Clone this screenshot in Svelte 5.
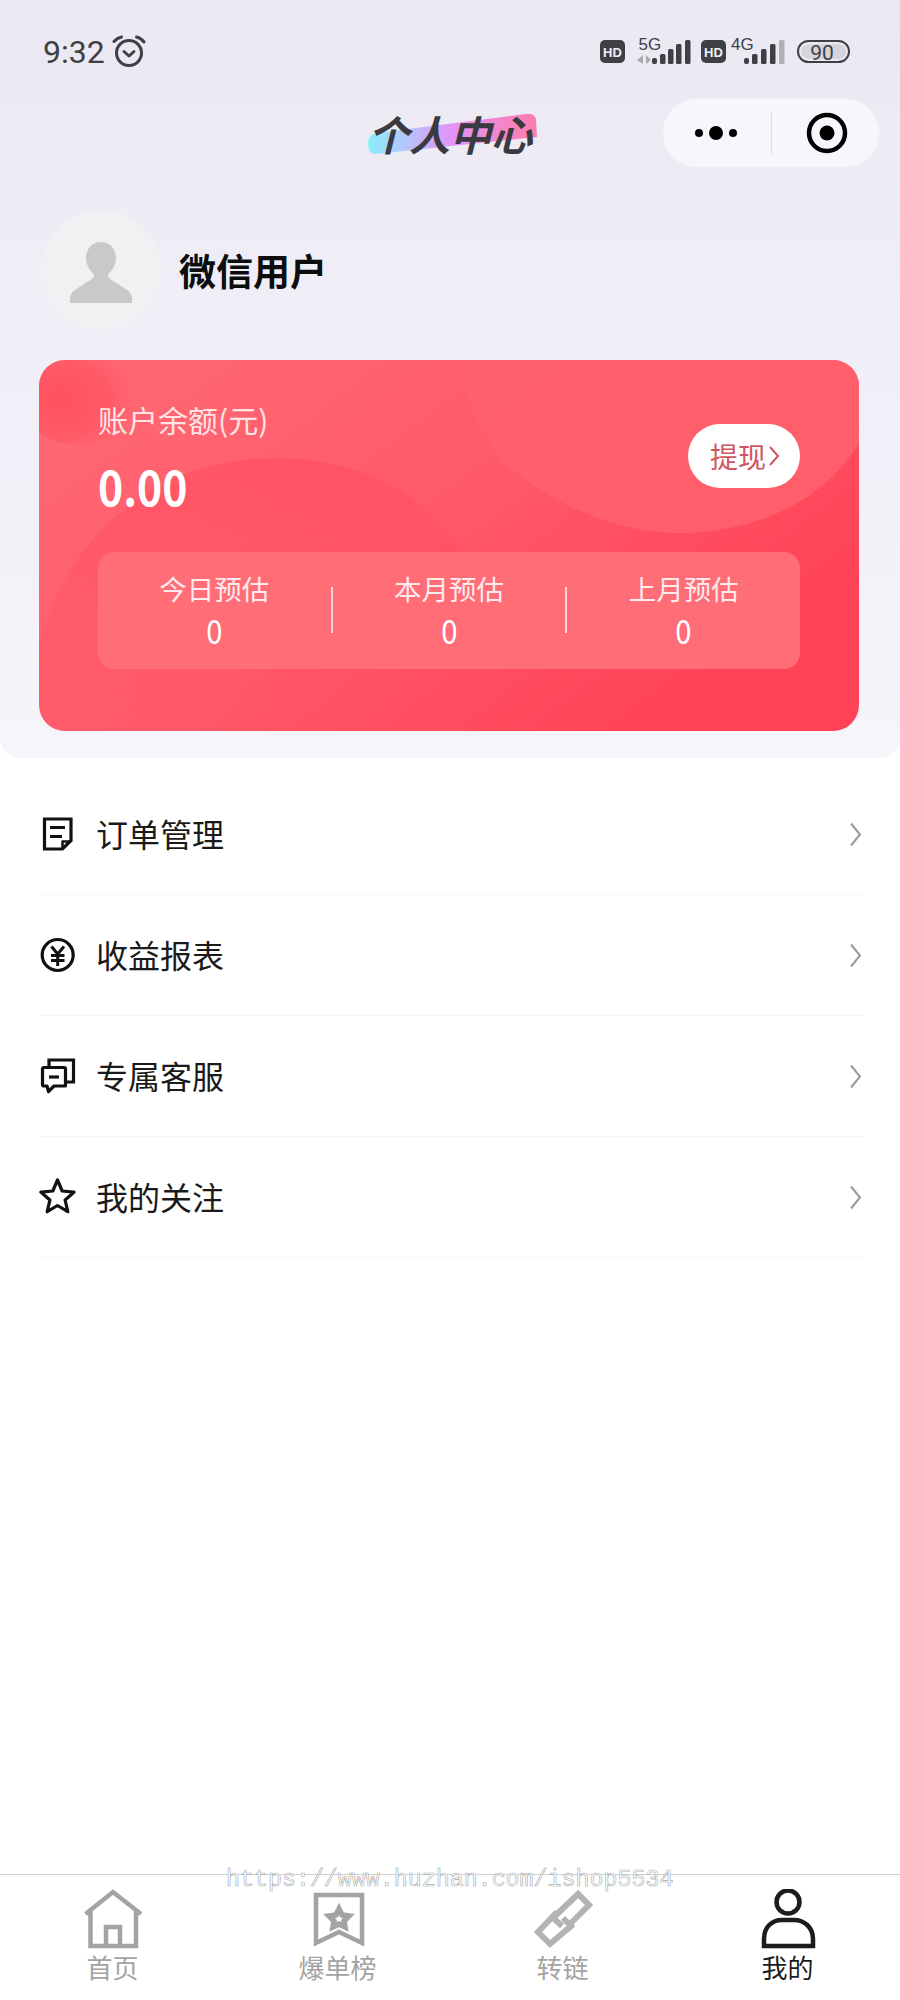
<script>
  const menu = [
    { label: '订单管理', icon: 'doc' },
    { label: '收益报表', icon: 'yen' },
    { label: '专属客服', icon: 'chat' },
    { label: '我的关注', icon: 'star' }
  ];
  const stats = ['今日预估', '本月预估', '上月预估'];
  const tabs = [
    { label: '首页', icon: 'home' },
    { label: '爆单榜', icon: 'rank' },
    { label: '转链', icon: 'link' },
    { label: '我的', icon: 'me', active: true }
  ];
</script>

<div class="page">
  <header class="panel">
    <div class="status">
      <div class="clock">
        <span class="time">9:32</span>
        <svg class="alarm" width="36" height="36" viewBox="0 0 36 36" fill="none" stroke="#3f3f46" stroke-width="3" stroke-linecap="round" stroke-linejoin="round">
          <circle cx="17" cy="20" r="12.5" />
          <path d="M12 18.5 L17 23 L22 18.5" />
          <path d="M2 8.5 Q5 5 9.5 4" />
          <path d="M24.5 4 Q29 5 32 9" />
        </svg>
      </div>
      <svg class="indicators" width="252" height="36" viewBox="600 35 252 36" fill="#3f3f46">
        <rect x="600" y="41" width="25" height="23" rx="5" />
        <text x="612.5" y="57.5" class="hd">HD</text>
        <text x="638.5" y="51" class="net">5G</text>
        <path d="M643 56 V65 L637 61 Z M646 56 V65 L651 61 Z" fill="#a9a9b0" />
        <rect x="652" y="59" width="5" height="6" rx="2" />
        <rect x="660" y="55" width="5.5" height="10" rx="1.5" />
        <rect x="668" y="50" width="5.5" height="15" rx="1.5" />
        <rect x="676" y="45" width="5.5" height="20" rx="1.5" />
        <rect x="685" y="41" width="5.5" height="24" rx="1.5" />
        <rect x="701" y="41" width="25" height="23" rx="5" />
        <text x="713.5" y="57.5" class="hd">HD</text>
        <text x="731" y="51" class="net">4G</text>
        <rect x="744" y="59" width="5" height="6" rx="2" />
        <rect x="752" y="55" width="5.5" height="10" rx="1.5" />
        <rect x="761" y="50" width="5.5" height="15" rx="1.5" />
        <rect x="770" y="45" width="5.5" height="20" rx="1.5" />
        <rect x="779" y="41" width="5.5" height="24" rx="1.5" fill="#afafb5" />
        <rect x="798" y="42" width="51" height="21" rx="10.5" fill="none" stroke="#3f3f46" stroke-width="2" />
        <path d="M812 45 H838 Q846 45 846 52.5 Q846 60 838 60 H812 Q801 60 801 52.5 Q801 45 812 45 Z" fill="#d6d4db" />
        <text x="822" y="61" class="batt">90</text>
      </svg>
    </div>

    <nav class="navbar">
      <div class="title">
        <svg class="swash" width="172" height="46" viewBox="0 0 172 46">
          <defs>
            <linearGradient id="swash-fill" x1="0" y1="0" x2="1" y2="0">
              <stop offset="0" stop-color="#8ceffc" />
              <stop offset="0.5" stop-color="#e492f8" />
              <stop offset="1" stop-color="#fb7dab" />
            </linearGradient>
          </defs>
          <path d="M11 23 L160 4 Q168 3 170 9 L171 27 L10 44 Q2 44 2 34 Q2 24 11 23 Z" fill="url(#swash-fill)" />
        </svg>
        <span>个人中心</span>
      </div>
      <div class="capsule">
        <div class="dots"><i></i><b></b><i></i></div>
        <div class="sep"></div>
        <svg width="44" height="44" viewBox="0 0 44 44" fill="none">
          <circle cx="22" cy="22" r="18" stroke="#000" stroke-width="4.5" />
          <circle cx="22" cy="22" r="7.5" fill="#000" />
        </svg>
      </div>
    </nav>

    <section class="profile">
      <div class="avatar">
        <svg width="64" height="64" viewBox="0 0 64 64" fill="#c9c9c9">
          <path d="M32 2 C41 2 47 9 47 18 C47 25 43 31 39 34 C39 38 41 39 46 42 L58 50 C61 52 63 55 63 59 V63 H1 V59 C1 55 3 52 6 50 L18 42 C23 39 25 38 25 34 C21 31 17 25 17 18 C17 9 23 2 32 2 Z" />
        </svg>
      </div>
      <div class="name">微信用户</div>
    </section>

    <section class="card">
      <svg class="card-bg" width="820" height="371" viewBox="0 0 820 371" preserveAspectRatio="none">
        <defs>
          <linearGradient id="card-fill" x1="0" y1="0" x2="1" y2="0.6">
            <stop offset="0" stop-color="#ff6b75" />
            <stop offset="0.55" stop-color="#ff5969" />
            <stop offset="1" stop-color="#ff4256" />
          </linearGradient>
          <radialGradient id="corner-fill" cx="0.18" cy="0.45" r="0.7">
            <stop offset="0" stop-color="#ff4f5d" stop-opacity="0.95" />
            <stop offset="0.65" stop-color="#ff4f5d" stop-opacity="0.55" />
            <stop offset="1" stop-color="#ff4f5d" stop-opacity="0" />
          </radialGradient>
          <linearGradient id="hump-fill" x1="0" y1="0" x2="0" y2="1">
            <stop offset="0" stop-color="#ff4f60" stop-opacity="0.7" />
            <stop offset="1" stop-color="#ff4f60" stop-opacity="0" />
          </linearGradient>
        </defs>
        <rect width="820" height="371" fill="url(#card-fill)" />
        <path d="M420 0 C430 60 450 80 466 103 C510 140 565 170 633 173 C700 175 780 150 820 83 V0 Z" fill="#ff616c" opacity="0.85" />
        <path d="M0 0 H110 V60 C90 75 60 84 33 84 C15 84 5 78 0 70 Z" fill="url(#corner-fill)" />
        <path d="M0 290 C30 160 130 98 236 98 C340 98 410 150 450 235 L470 371 H0 Z" fill="url(#hump-fill)" />
      </svg>
      <div class="card-top">
        <div>
          <div class="balance-label">账户余额(元)</div>
          <div class="balance">0.00</div>
        </div>
        <button class="withdraw">提现<svg width="12" height="24" viewBox="0 0 12 24" fill="none" stroke="#cf5563" stroke-width="2"><path d="M2 3 L10 12 L2 21" /></svg></button>
      </div>
      <div class="stats">
        {#each stats as label, i}
          {#if i > 0}<div class="divider"></div>{/if}
          <div class="stat">
            <div class="stat-label">{label}</div>
            <div class="stat-value">0</div>
          </div>
        {/each}
      </div>
    </section>
  </header>

  <main class="menu">
    {#each menu as item}
      <div class="row">
        <svg class="menu-icon" width="40" height="40" viewBox="0 0 40 40" fill="none" stroke="#111" stroke-width="3.2" stroke-linejoin="round">
          {#if item.icon === 'doc'}
            <path d="M5.5 5 H32 V26.5 L23.5 35 H5.5 Z" stroke-linejoin="miter" />
            <path d="M11 13.5 H26 M11 22.5 H23" />
            <path d="M23.5 34 V27.5 H32" stroke-width="2.5" />
          {:else if item.icon === 'yen'}
            <circle cx="18.7" cy="20" r="15.5" />
            <path d="M12.5 11.5 L18.7 19 L25 11.5 M12 20.5 H25.5 M12 25.5 H25.5 M18.7 19 V31" stroke-width="3" />
          {:else if item.icon === 'chat'}
            <path d="M3.5 13 Q3.5 11.5 5 11.5 H25 Q26.5 11.5 26.5 13 V30 H15 L9.5 35.5 L8 30 H5 Q3.5 30 3.5 28.5 Z" />
            <path d="M10 21 H20" />
            <path d="M10 10 V4 H34.5 V26 H28" stroke-linejoin="miter" />
          {:else}
            <path d="M18.5 3 L23.2 14 L35.1 15.1 L26.1 23 L28.8 34.7 L18.5 28.5 L8.2 34.7 L10.9 23 L1.9 15.1 L13.8 14 Z" />
          {/if}
        </svg>
        <span class="row-label">{item.label}</span>
        <svg class="chevron" width="13" height="25" viewBox="0 0 13 25" fill="none" stroke="#9a9a9a" stroke-width="2"><path d="M2 1.5 L11 12.5 L2 23.5" /></svg>
      </div>
    {/each}
  </main>

  <footer class="tabbar">
    <div class="watermark">https://www.huzhan.com/ishop5534</div>
    {#each tabs as tab}
      <div class="tab" class:active={tab.active} class:link={tab.icon === 'link'}>
        <svg width="60" height="60" viewBox="0 0 60 60" fill="none" stroke="currentColor" stroke-width="4.5">
          {#if tab.icon === 'home'}
            <path d="M2.5 25 L30 3 L58 25 M7.5 21 V57 H53 V21 M23 57 V38 H37 V57" />
          {:else if tab.icon === 'rank'}
            <path d="M8 6 H54 V54 L31 43 L8 54 Z" />
            <path d="M31 20 L34 26 L41 27 L36 32 L37 38 L31 35 L25 38 L26 32 L21 27 L28 26 Z" stroke-width="5.5" />
          {:else if tab.icon === 'link'}
            <path d="M38 34 L56 16 L45 5 L20 29 L29 37" stroke-width="6" />
            <path d="M24 23 L5 43 L17 55 L38 37 L30 29" stroke-width="6" />
          {:else}
            <circle cx="30" cy="13" r="11.5" />
            <path d="M6 57 V50 C6 38 14 31 24 31 H36 C46 31 55 38 55 50 V57 Z" />
          {/if}
        </svg>
        <span class="tab-label">{tab.label}</span>
      </div>
    {/each}
  </footer>
</div>

<style>
  :global(body) {
    margin: 0;
    background: #fff;
  }

  .page {
    display: flex;
    flex-direction: column;
    min-height: 2000px;
    font-family: "Noto Sans CJK SC", "Noto Sans", sans-serif;
    color: #111;
  }

  .panel {
    background: linear-gradient(180deg, #ebe8f2 0%, #f0eef7 45%, #f5f5fa 100%);
    border-radius: 0 0 20px 20px;
    padding-bottom: 27px;
  }

  .status {
    display: flex;
    justify-content: space-between;
    align-items: center;
    height: 80px;
    padding: 24px 48px 0 43px;
    box-sizing: border-box;
  }

  .clock {
    display: flex;
    align-items: center;
  }

  .time {
    font-family: Roboto, sans-serif;
    font-size: 32px;
    line-height: 36px;
    color: #3f3f46;
    width: 69px;
  }

  .alarm {
    margin-top: -2px;
  }

  .hd {
    font-family: "Liberation Sans", sans-serif;
    font-size: 13px;
    font-weight: 700;
    fill: #f0eef6;
    text-anchor: middle;
  }

  .net {
    font-family: "Liberation Sans", sans-serif;
    font-size: 17px;
  }

  .batt {
    font-family: Roboto, sans-serif;
    font-size: 21px;
    text-anchor: middle;
  }

  .navbar {
    display: grid;
    grid-template-columns: 1fr auto 1fr;
    align-items: center;
    height: 70px;
    margin-top: 18px;
    padding-right: 20px;
  }

  .title {
    grid-column: 2;
    position: relative;
    margin-left: 20px;
    font-size: 41px;
    line-height: 48px;
    font-style: italic;
    font-weight: 700;
    color: #3a3a40;
    white-space: nowrap;
  }

  .title span {
    position: relative;
  }

  .swash {
    position: absolute;
    left: -2px;
    top: 1px;
  }

  .capsule {
    grid-column: 3;
    justify-self: end;
    display: flex;
    align-items: center;
    width: 218px;
    height: 70px;
    box-sizing: border-box;
    padding-left: 32px;
    background: #f7f6fc;
    border: 1px solid #efedf5;
    border-radius: 35px;
  }

  .dots {
    display: flex;
    align-items: center;
    gap: 6px;
    width: 76px;
  }

  .dots i {
    width: 8px;
    height: 8px;
    border-radius: 50%;
    background: #000;
  }

  .dots b {
    width: 14px;
    height: 14px;
    border-radius: 50%;
    background: #000;
  }

  .sep {
    width: 1px;
    height: 42px;
    background: #dedde3;
    margin-right: 33px;
  }

  .profile {
    display: flex;
    align-items: center;
    gap: 18px;
    margin-top: 42px;
    padding-left: 41px;
  }

  .avatar {
    display: flex;
    align-items: flex-end;
    justify-content: center;
    width: 120px;
    height: 120px;
    padding-bottom: 26px;
    box-sizing: border-box;
    border-radius: 50%;
    background: #f1f1f3;
  }

  .name {
    font-size: 37px;
    line-height: 44px;
    font-weight: 700;
    color: #0d0d0d;
  }

  .card {
    position: relative;
    overflow: hidden;
    box-sizing: border-box;
    height: 371px;
    margin: 30px 41px 0 39px;
    padding: 44px 59px 0;
    border-radius: 26px;
    color: #fff;
  }

  .card-bg {
    position: absolute;
    left: 0;
    top: 0;
  }

  .card-top {
    position: relative;
    display: flex;
    justify-content: space-between;
    align-items: flex-start;
  }

  .balance-label {
    font-size: 30px;
    line-height: 30px;
    color: #ffe3e5;
  }

  .balance {
    margin-top: 20px;
    font-size: 48px;
    line-height: 62px;
    font-weight: 700;
    transform: scaleX(0.89);
    transform-origin: left center;
  }

  .withdraw {
    display: flex;
    align-items: center;
    justify-content: center;
    gap: 2px;
    width: 112px;
    height: 64px;
    margin-top: 20px;
    padding: 0 0 0 2px;
    border: none;
    border-radius: 32px;
    background: #fff;
    color: #cf5563;
    font-family: inherit;
    font-size: 28px;
  }

  .stats {
    position: relative;
    display: flex;
    align-items: flex-start;
    height: 117px;
    margin-top: 36px;
    border-radius: 16px;
    background: #ff6d77;
  }

  .stat {
    flex: 1;
    text-align: center;
    padding-top: 18px;
  }

  .divider {
    width: 2px;
    height: 46px;
    margin-top: 35px;
    background: #ffd3d7;
  }

  .stat-label {
    font-size: 27.5px;
    line-height: 36px;
    color: #ffeaec;
  }

  .stat-value {
    margin-top: 4px;
    font-size: 34px;
    line-height: 40px;
    color: #fff;
    transform: scaleX(0.86);
  }

  .menu {
    margin: 16px 38px 0 39px;
  }

  .row {
    display: flex;
    align-items: center;
    height: 121px;
    box-sizing: border-box;
    border-bottom: 1px solid #f5f5f6;
  }

  .menu-icon {
    margin-right: 17px;
  }

  .row-label {
    flex: 1;
    font-size: 32px;
    line-height: 38px;
    margin-bottom: 2px;
    color: #1a1a1a;
  }

  .tabbar {
    position: relative;
    display: grid;
    grid-template-columns: repeat(4, 1fr);
    margin-top: auto;
    height: 126px;
    box-sizing: border-box;
    padding-top: 14px;
    border-top: 1px solid #cfcfcf;
  }

  .watermark {
    position: absolute;
    left: 226px;
    top: -10px;
    font-family: "Liberation Mono", monospace;
    font-size: 23.3px;
    line-height: 30px;
    color: #fff;
    -webkit-text-stroke: 0.6px #aaa;
    white-space: nowrap;
    z-index: 1;
  }

  .tab {
    display: flex;
    flex-direction: column;
    align-items: center;
    color: #a3a3a3;
  }

  .tab.link {
    color: #b3b3b3;
  }

  .tab.active {
    color: #1c1c1c;
  }

  .tab-label {
    margin-top: 2px;
    font-size: 26px;
    line-height: 32px;
  }

  .tab.link .tab-label {
    color: #a3a3a3;
  }
</style>
